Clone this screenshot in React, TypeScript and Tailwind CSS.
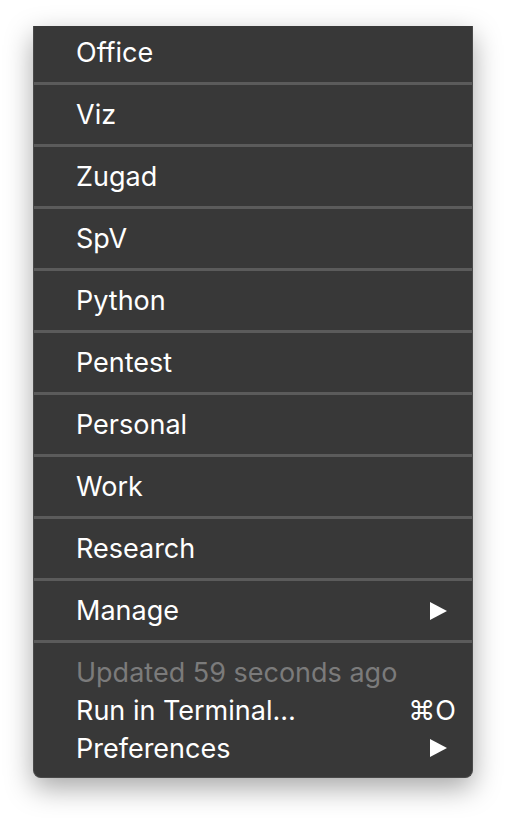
import * as React from "react"

const projects = ["Office", "Viz", "Zugad", "SpV", "Python", "Pentest", "Personal", "Work", "Research"]

function Arrow() {
  return (
    <svg width="17" height="18" viewBox="0 0 17 18" className="shrink-0">
      <path d="M0 0 L17 9 L0 18 Z" fill="#ffffff" />
    </svg>
  )
}

function Separator() {
  return <div className="h-[3px] bg-[#5b5b5b]" />
}

export default function App() {
  return (
    <div className="h-[818px] w-[506px] bg-white font-['Inter','Liberation_Sans',sans-serif]">
      <div className="ml-[33px] w-[440px] pt-[26px]">
        <div className="overflow-hidden rounded-b-[8px] border-x border-b border-[#4a4a4a] bg-[#383838] text-[27px] leading-none text-white shadow-[0_10px_28px_rgba(0,0,0,0.35)]">
          {projects.map((p, i) => (
            <React.Fragment key={p}>
              <div
                className={
                  i === 0
                    ? "flex h-[56px] items-center pb-[3px] pl-[42px]"
                    : "flex h-[59px] items-center pl-[42px]"
                }
              >
                {p}
              </div>
              <Separator />
            </React.Fragment>
          ))}
          <div className="flex h-[59px] items-center justify-between pl-[42px] pr-[25px]">
            <span>Manage</span>
            <Arrow />
          </div>
          <Separator />
          <div className="pb-[10px] pt-[10px]">
            <div className="flex h-[38px] items-center pl-[42px] text-[#7b7b7b]">
              Updated 59 seconds ago
            </div>
            <div className="flex h-[38px] items-center justify-between pl-[42px] pr-[16px]">
              <span>Run in Terminal…</span>
              <span>⌘O</span>
            </div>
            <div className="flex h-[38px] items-center justify-between pl-[42px] pr-[25px]">
              <span>Preferences</span>
              <Arrow />
            </div>
          </div>
        </div>
      </div>
    </div>
  )
}
